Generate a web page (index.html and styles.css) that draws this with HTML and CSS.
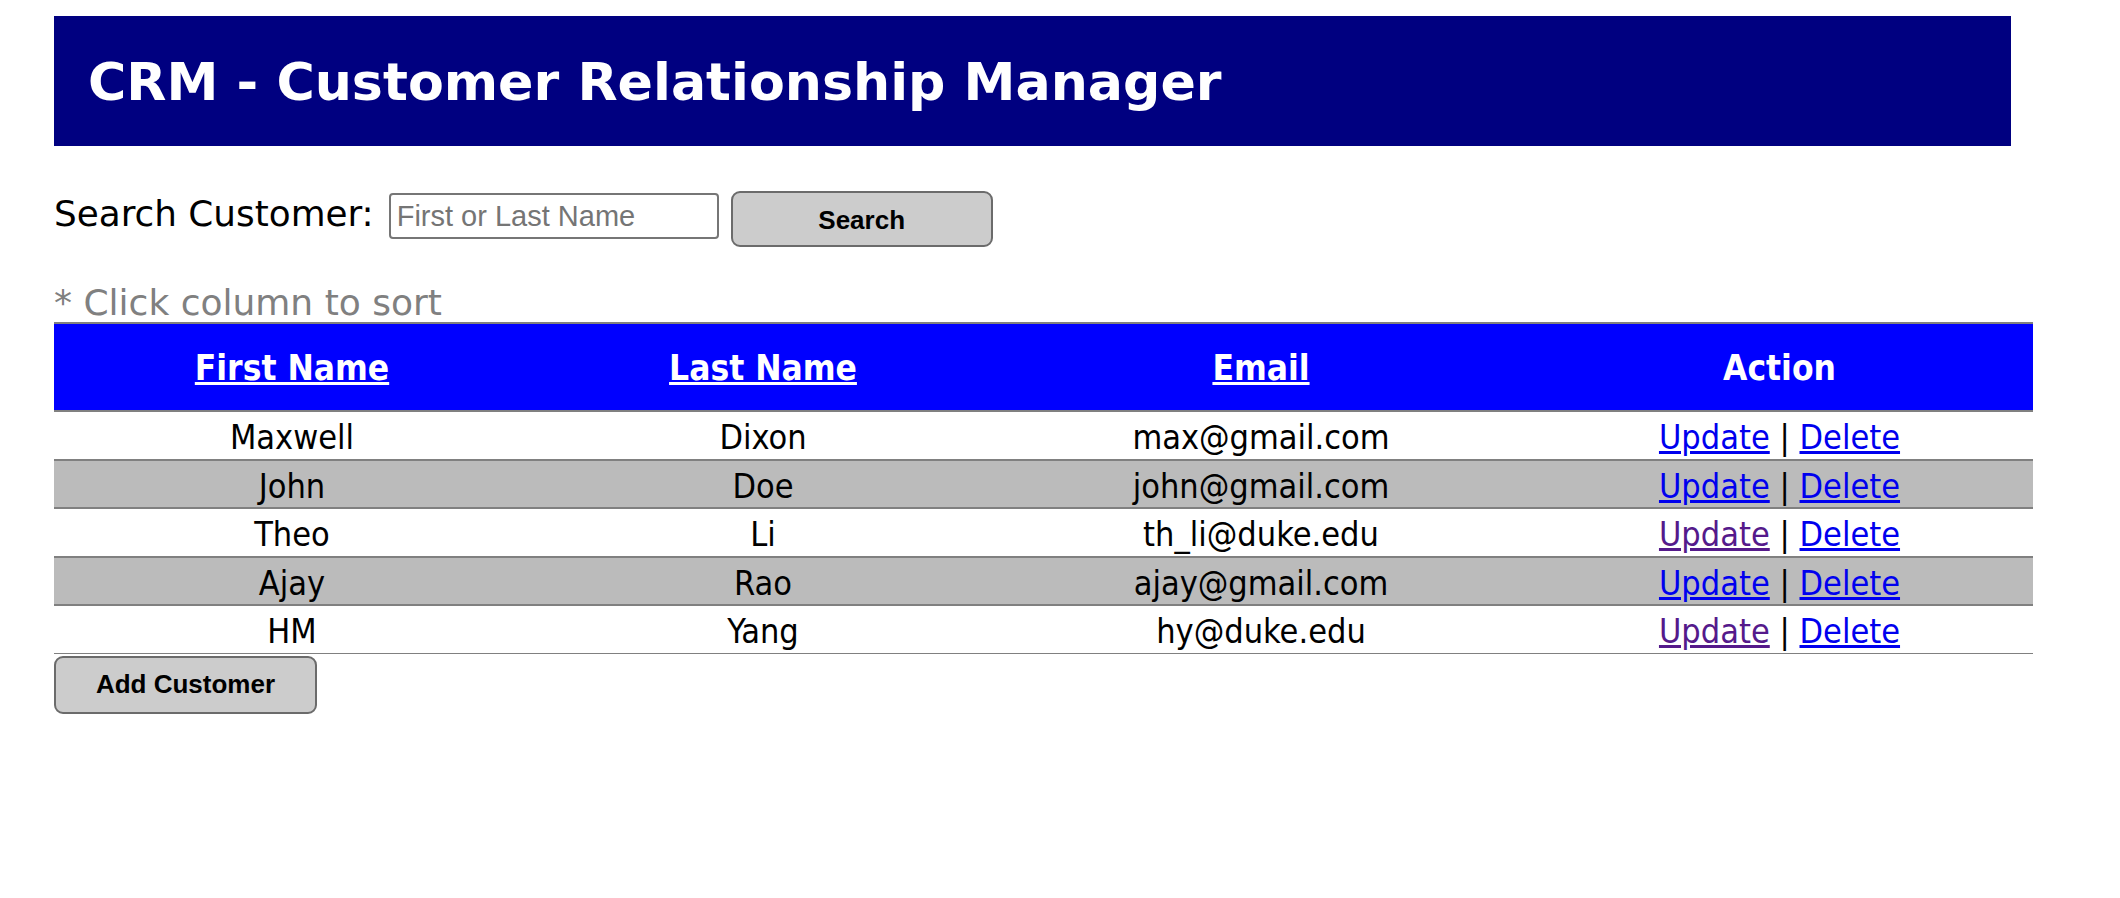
FILE: index.html
```html
<!DOCTYPE html>
<html lang="en">
<head>
<meta charset="utf-8">
<title>CRM - Customer Relationship Manager</title>
<link rel="stylesheet" href="styles.css">
</head>
<body>
<div class="page">
  <header class="banner">
    <h1 class="banner-title">CRM - Customer Relationship Manager</h1>
  </header>

  <form class="search-row">
    <label class="search-label" for="q">Search Customer:</label>
    <input class="search-input" id="q" type="text" placeholder="First or Last Name">
    <button class="btn btn-search" type="button">Search</button>
  </form>

  <p class="sort-note">* Click column to sort</p>

  <table class="customers">
    <colgroup>
      <col class="c1"><col class="c2"><col class="c3"><col class="c4">
    </colgroup>
    <thead>
      <tr>
        <th><a class="sort-link" href="#">First Name</a></th>
        <th><a class="sort-link" href="#">Last Name</a></th>
        <th><a class="sort-link" href="#">Email</a></th>
        <th>Action</th>
      </tr>
    </thead>
    <tbody>
      <tr>
        <td>Maxwell</td><td>Dixon</td><td>max@gmail.com</td>
        <td><a class="act" href="#">Update</a> | <a class="act" href="#">Delete</a></td>
      </tr>
      <tr class="alt">
        <td>John</td><td>Doe</td><td>john@gmail.com</td>
        <td><a class="act" href="#">Update</a> | <a class="act" href="#">Delete</a></td>
      </tr>
      <tr>
        <td>Theo</td><td>Li</td><td>th_li@duke.edu</td>
        <td><a class="act visited" href="#">Update</a> | <a class="act" href="#">Delete</a></td>
      </tr>
      <tr class="alt">
        <td>Ajay</td><td>Rao</td><td>ajay@gmail.com</td>
        <td><a class="act" href="#">Update</a> | <a class="act" href="#">Delete</a></td>
      </tr>
      <tr class="last">
        <td>HM</td><td>Yang</td><td>hy@duke.edu</td>
        <td><a class="act visited" href="#">Update</a> | <a class="act" href="#">Delete</a></td>
      </tr>
    </tbody>
  </table>

  <button class="btn btn-add" type="button">Add Customer</button>
</div>
</body>
</html>
```

FILE: styles.css
```css
html, body {
  margin: 0;
  padding: 0;
  background: #ffffff;
}

body {
  font-family: "DejaVu Sans", Verdana, sans-serif;
  color: #000000;
}

.page {
  padding: 16px 0 0 54px;
}

.banner {
  width: 1957px;
  height: 130px;
  background: #000080;
  display: flex;
  align-items: center;
  padding-left: 34px;
  box-sizing: border-box;
}

.banner-title {
  margin: 0;
  color: #ffffff;
  font-size: 52.2px;
  font-weight: bold;
  line-height: 1;
  padding-top: 2px;
}

.search-row {
  margin: 45px 0 0 0;
  height: 56px;
  display: flex;
  align-items: flex-start;
}

.search-label {
  margin-top: 5px;
  font-size: 35.8px;
  line-height: 36px;
}

.search-input {
  margin: 2px 0 0 15px;
  width: 330px;
  height: 46px;
  box-sizing: border-box;
  border: 2px solid #767676;
  border-radius: 4px;
  padding: 0 6px;
  font-family: "Liberation Sans", Arial, sans-serif;
  font-size: 29px;
  color: #000;
}

.search-input::placeholder {
  color: #757575;
}

.btn {
  box-sizing: border-box;
  background: #cccccc;
  border: 2px solid #6b6b6b;
  border-radius: 9px;
  font-family: "Liberation Sans", Arial, sans-serif;
  font-weight: bold;
  font-size: 26px;
  color: #000;
  padding: 0;
}

.btn-search {
  margin-left: 12px;
  width: 262px;
  height: 56px;
  padding-top: 2px;
}

.sort-note {
  margin: 36px 0 0 0;
  height: 39px;
  line-height: 39px;
  font-size: 36px;
  color: #808080;
}

.customers {
  width: 1979px;
  border-collapse: collapse;
  table-layout: fixed;
  font-family: "DejaVu Sans Condensed", "DejaVu Sans", sans-serif;
  font-size: 34px;
  border-top: 2px solid #808080;
}

.c1 { width: 476px; }
.c2 { width: 466px; }
.c3 { width: 530px; }
.c4 { width: 507px; }

.customers th {
  background: #0000ff;
  color: #ffffff;
  font-size: 35px;
  font-weight: bold;
  height: 84px;
  padding: 2px 0 0 0;
  text-align: center;
  vertical-align: middle;
  border-bottom: 2px solid #808080;
}

.sort-link {
  color: #ffffff;
  text-decoration: underline;
}

.customers td {
  height: 43px;
  padding: 3.6px 0 0 0;
  text-align: center;
  vertical-align: middle;
  border-bottom: 2px solid #808080;
  line-height: 1;
}

.customers tr.alt td {
  background: #bbbbbb;
}

.customers tr.last td {
  border-bottom: 1px solid #808080;
}

.act {
  color: #0000ee;
  text-decoration: underline;
}

.act.visited {
  color: #551a8b;
}

.btn-add {
  display: block;
  margin-top: 2px;
  width: 263px;
  height: 58px;
}
```
